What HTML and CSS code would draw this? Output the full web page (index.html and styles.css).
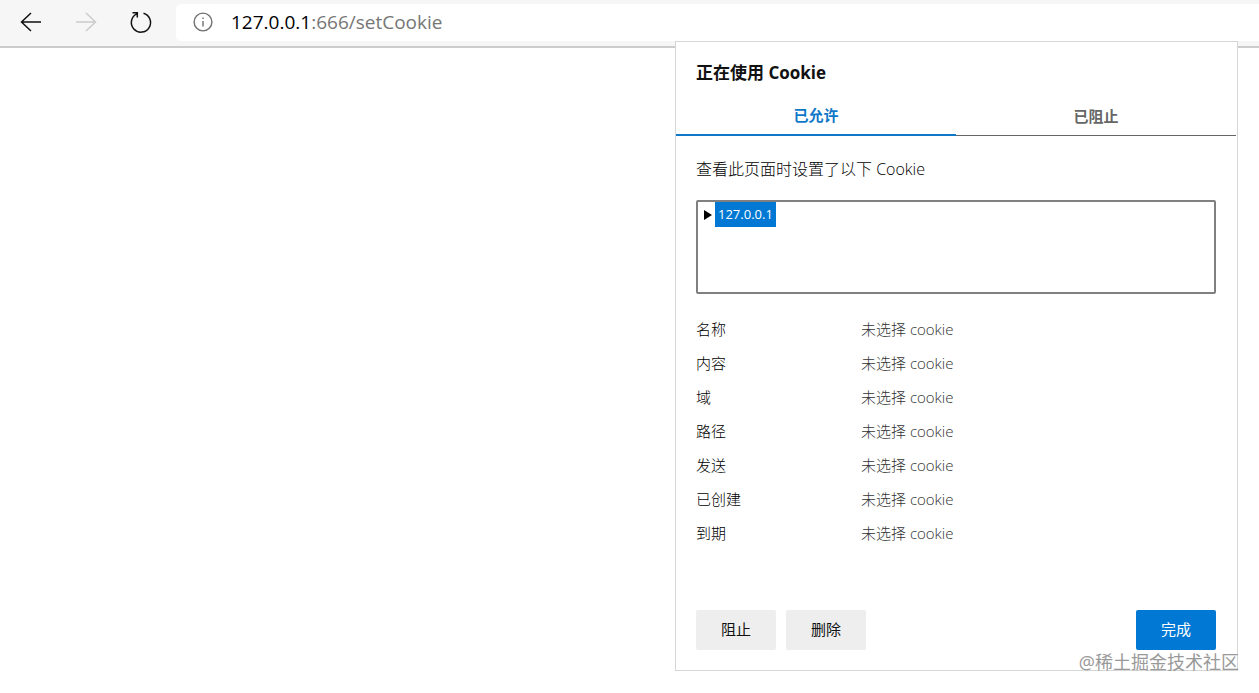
FILE: index.html
```html
<!DOCTYPE html>
<html lang="zh-CN">
<head>
<meta charset="utf-8">
<meta name="viewport" content="width=device-width, initial-scale=1">
<title>127.0.0.1:666/setCookie</title>
<link rel="stylesheet" href="styles.css">
</head>
<body>
<header class="toolbar">
  <nav class="nav-buttons">
    <button class="nav-button" type="button" aria-label="后退">
      <svg viewBox="0 0 24 24" width="24" height="24"><path d="M22 12H2.500M12 3L2.500 12L12 21"/></svg>
    </button>
    <button class="nav-button nav-button-off" type="button" aria-label="前进" disabled>
      <svg viewBox="0 0 24 24" width="24" height="24"><path d="M2 12H21.500M12 3L21.500 12L12 21"/></svg>
    </button>
    <button class="nav-button" type="button" aria-label="刷新">
      <svg viewBox="0 0 24 24" width="24" height="24"><path d="M14.500 3.300A9.600 9.600 0 1 1 7.800 3.900M3.500 2.700H8.300V7.500"/></svg>
    </button>
  </nav>
  <div class="address">
    <button class="info-button" type="button" aria-label="查看站点信息">
      <svg viewBox="0 0 20 20" width="20" height="20"><circle cx="10" cy="10" r="8.900"/><path d="M10 9V14.500M10 5.500V7"/></svg>
    </button>
    <a class="url" href="#"><span class="url-host">127.0.0.1</span>:666/setCookie</a>
  </div>
</header>

<section class="dialog" role="dialog" aria-labelledby="dialog-title">
  <h1 class="dialog-title" id="dialog-title">正在使用 Cookie</h1>
  <div class="tabs" role="tablist">
    <button class="tab tab-active" type="button" role="tab" aria-selected="true">已允许</button>
    <button class="tab" type="button" role="tab" aria-selected="false">已阻止</button>
  </div>
  <div class="dialog-body">
    <p class="intro">查看此页面时设置了以下 Cookie</p>
    <div class="cookie-tree">
      <details>
        <summary class="tree-item">
          <svg class="tree-arrow" viewBox="0 0 8 10" width="8" height="10"><path d="M0 0L8 5L0 10Z"/></svg>
          <span class="tree-label">127.0.0.1</span>
        </summary>
      </details>
    </div>
    <dl class="fields">
      <dt>名称</dt><dd>未选择 cookie</dd>
      <dt>内容</dt><dd>未选择 cookie</dd>
      <dt>域</dt><dd>未选择 cookie</dd>
      <dt>路径</dt><dd>未选择 cookie</dd>
      <dt>发送</dt><dd>未选择 cookie</dd>
      <dt>已创建</dt><dd>未选择 cookie</dd>
      <dt>到期</dt><dd>未选择 cookie</dd>
    </dl>
    <div class="actions">
      <button class="button" type="button">阻止</button>
      <button class="button" type="button">删除</button>
      <button class="button button-primary" type="button">完成</button>
    </div>
  </div>
</section>
<div class="watermark">@稀土掘金技术社区</div>
</body>
</html>
```

FILE: styles.css
```css
* {
  box-sizing: border-box;
}

body {
  margin: 0;
  background: #fff;
  color: #111;
  font-family: "Open Sans", "Noto Sans CJK SC", sans-serif;
  font-size: 15px;
}

button {
  border: 0;
  padding: 0;
  background: none;
  color: inherit;
  font: inherit;
}

svg {
  display: block;
  fill: none;
  stroke: currentColor;
}

.toolbar {
  display: flex;
  height: 48px;
  padding: 4px 0 5px 19px;
  border-bottom: 2px solid #ccc;
  background: #f6f6f6;
}

.nav-buttons {
  display: flex;
  align-items: center;
  gap: 31px;
  margin-right: 23px;
  padding-bottom: 2px;
}

.nav-button svg {
  stroke-width: 1.5;
}

.nav-button-off {
  color: #ccc;
}

.address {
  display: flex;
  flex: 1;
  align-items: center;
  gap: 18px;
  padding: 0 0 2px 17px;
  border-radius: 5px 0 0 5px;
  background: #fff;
}

.info-button {
  color: #707070;
}

.info-button svg {
  stroke-width: 1.4;
}

.url {
  color: #767676;
  font-size: 19px;
  line-height: 24px;
  text-decoration: none;
}

.url-host {
  color: #000;
}

.dialog {
  position: absolute;
  top: 41px;
  right: 21px;
  width: 563px;
  border: 1px solid #d6d6d6;
  background: #fff;
}

.dialog-title {
  margin: 0;
  padding: 19px 20px 11px;
  font-size: 17px;
  font-weight: 700;
  line-height: 24px;
}

.tabs {
  display: flex;
  height: 40px;
  margin-right: 1px;
}

.tab {
  flex: 1;
  border-bottom: 1px solid #666;
  color: #666;
  font-weight: 700;
  line-height: 38px;
}

.tab-active {
  border-bottom: 2px solid #0f78c8;
  color: #0f78c8;
}

.dialog-body {
  padding: 20px 21px 20px 20px;
}

.intro {
  margin: 0;
  color: #000;
  font-size: 16px;
  font-weight: 300;
  line-height: 26px;
}

.cookie-tree {
  height: 94px;
  margin-top: 18px;
  border: 2px solid #808080;
  border-radius: 2px;
}

.tree-item {
  display: flex;
  align-items: center;
  gap: 3px;
  padding-left: 6px;
  list-style: none;
}

.tree-arrow {
  fill: #000;
  stroke: none;
}

.tree-label {
  padding: 0 3px;
  background: #0078d4;
  color: #fff;
  font-size: 13px;
  line-height: 25px;
}

.fields {
  display: grid;
  grid-template-columns: 165px 1fr;
  margin: 18px 0 60px;
  color: #000;
  font-weight: 300;
  line-height: 34px;
}

.fields dd {
  margin: 0;
  color: #333;
}

.actions {
  display: flex;
  gap: 10px;
}

.button {
  width: 80px;
  height: 40px;
  padding-bottom: 3px;
  border-radius: 2px;
  background: #eee;
}

.button-primary {
  margin-left: auto;
  background: #0078d4;
  color: #fff;
}

.watermark {
  position: absolute;
  top: 650px;
  right: 20px;
  color: #999;
  font-size: 18px;
  line-height: 24px;
}
```
